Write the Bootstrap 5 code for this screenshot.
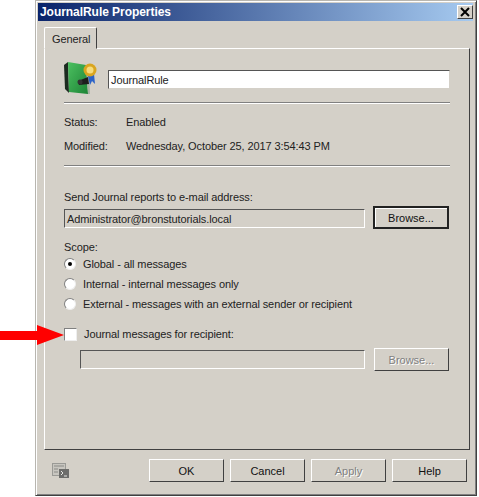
<!DOCTYPE html>
<html lang="en">
<head>
    <meta charset="UTF-8">
    <title>JournalRule Properties</title>
    <link href="https://cdn.jsdelivr.net/npm/bootstrap@5.3.3/dist/css/bootstrap.min.css" rel="stylesheet">
    <style>
        html, body { height: 497px; overflow: hidden; background: #fff; }
        body { font-family: "Liberation Sans", Arial, sans-serif; font-size: 11px; letter-spacing: -0.1px; line-height: 14px; color: #222; position: relative; }
        .dlg { margin-left: 35px; width: 442px; height: 496px; background: #d4d0c8; border: 1px solid #b8b6b0; border-right-color: #404040; border-bottom-color: #404040; box-shadow: inset 1px 1px 0 #fff, inset -1px -1px 0 #808080; padding: 2px 3px 0 2px; }
        .dlg-title { height: 18px; margin-bottom: 6px; background: linear-gradient(90deg, #0a246a, #a6caf0); color: #fff; font-weight: 700; font-size: 12px; letter-spacing: -0.05px; padding-left: 2px; }
        .dlg-close { width: 16px; height: 14px; padding: 0; background: #d4d0c8; border: 1px solid; border-color: #fff #404040 #404040 #fff; line-height: 0; }
        .dlg-body { padding-left: 6px; }
        .tab-item { width: 53px; height: 22px; padding: 4px 0 0 7px; background: #d4d0c8; border: 1px solid; border-color: #fff #404040 #d4d0c8 #fff; border-radius: 2px 2px 0 0; position: relative; margin-bottom: -1px; }
        .tab-pane-box { width: 426px; height: 402px; border: 1px solid; border-color: #fff #404040 #404040 #fff; padding: 13px 19px 0; }
        .head-row { height: 32px; margin-bottom: 8px; }
        .field { height: 19px; background: #fff; border: 1px solid; border-color: #555 #fff #fff #555; padding: 2px; }
        .field-name { width: 342px; margin-left: 9px; margin-top: 8px; border-color: #555 #d4d0c8 #d4d0c8 #555; }
        .field-off { background: #d4d0c8; }
        .rule { height: 2px; background: #808080; border-bottom: 1px solid #fff; width: 386px; }
        .rule-first { margin-bottom: 6px; }
        .rule-second { margin-top: 7px; margin-bottom: 23px; }
        .info-row { height: 24px; }
        .info-key { width: 62px; }
        .win-btn { width: 75px; height: 23px; padding: 0; background: #d4d0c8; border: 1px solid; border-color: #fff #404040 #404040 #fff; font-size: 11px; line-height: 20px; color: #111; flex: none; }
        .win-btn-def { width: 76px; margin-left: 8px; border: 2px solid #222; box-shadow: inset 1px 1px 0 #fff; }
        .win-btn:disabled { color: #808080; text-shadow: 1px 1px 0 #fff; opacity: 1; }
        .addr-row { margin-top: 2px; }
        .addr-field { width: 301px; margin-top: 3px; }
        .scope-label { margin-top: 11px; }
        .opt-row { height: 20px; gap: 7px; }
        .opt-ring { width: 12px; height: 12px; border-radius: 50%; background: #fff; border: 1px solid #808080; border-right-color: #eee; border-bottom-color: #eee; flex: none; position: relative; }
        .opt-on::after { content: ""; position: absolute; left: 3px; top: 3px; width: 4px; height: 4px; border-radius: 50%; background: #000; }
        .check-box { width: 13px; height: 13px; background: #fff; border: 1px solid #808080; border-right-color: #eee; border-bottom-color: #eee; flex: none; }
        .recip-row { margin-top: 10px; }
        .recip-inputs { margin-top: 4px; }
        .recip-field { width: 285px; margin: 2px 9px 0 16px; }
        .foot-row { width: 426px; padding: 9px 3px 0 8px; gap: 6px; }
        .foot-icon { margin-top: 4px; }
        .red-arrow { position: absolute; left: 0; top: 325px; }
    </style>
</head>
<body>
    <div class="dlg">
        <div class="dlg-title d-flex justify-content-between align-items-center">
            <span>JournalRule Properties</span>
            <button class="dlg-close" aria-label="Close">
                <svg width="10" height="10" viewBox="0 0 10 10"><path d="M1 1 L9 9 M9 1 L1 9" stroke="#000" stroke-width="2"/></svg>
            </button>
        </div>
        <div class="dlg-body">
            <div class="tab-item">General</div>
            <div class="tab-pane-box">
                <div class="d-flex head-row">
                    <svg class="flex-shrink-0" width="35" height="33" viewBox="0 0 35 33">
                        <defs>
                            <linearGradient id="coverFill" x1="0" y1="0" x2="1" y2="1">
                                <stop offset="0" stop-color="#4cc060"/>
                                <stop offset="1" stop-color="#1d8436"/>
                            </linearGradient>
                        </defs>
                        <path d="M0 3 L4 0 L5 31 L1 27 Z" fill="#1c2a20"/>
                        <path d="M4 0 L22 3 L24 32 L5 30 Z" fill="url(#coverFill)"/>
                        <path d="M22 3 L25 5 L26 32 L24 32 Z" fill="#a9b2a4"/>
                        <path d="M14 19 L24 15 L25 22 L15 23 Z" fill="#1d1d1d"/>
                        <circle cx="16" cy="20" r="2.5" fill="#333"/>
                        <path d="M24 14 L26 23 L28 19 L31 22 L30 12 Z" fill="#2a62c8"/>
                        <circle cx="26" cy="8" r="6.5" fill="#d9a520"/>
                        <circle cx="26" cy="8" r="3.5" fill="#f6dc7c"/>
                    </svg>
                    <div class="field field-name flex-shrink-0">JournalRule</div>
                </div>
                <div class="rule rule-first"></div>
                <div class="d-flex info-row align-items-center"><span class="info-key">Status:</span><span>Enabled</span></div>
                <div class="d-flex info-row align-items-center"><span class="info-key">Modified:</span><span>Wednesday, October 25, 2017 3:54:43 PM</span></div>
                <div class="rule rule-second"></div>
                <div>Send Journal reports to e-mail address:</div>
                <div class="d-flex addr-row">
                    <div class="field field-off addr-field">Administrator@bronstutorials.local</div>
                    <button class="win-btn win-btn-def">Browse...</button>
                </div>
                <div class="scope-label">Scope:</div>
                <div class="d-flex align-items-center opt-row"><span class="opt-ring opt-on"></span><span>Global - all messages</span></div>
                <div class="d-flex align-items-center opt-row"><span class="opt-ring"></span><span>Internal - internal messages only</span></div>
                <div class="d-flex align-items-center opt-row"><span class="opt-ring"></span><span>External - messages with an external sender or recipient</span></div>
                <div class="d-flex align-items-center opt-row recip-row"><span class="check-box"></span><span>Journal messages for recipient:</span></div>
                <div class="d-flex recip-inputs">
                    <div class="field field-off recip-field"></div>
                    <button class="win-btn" disabled>Browse...</button>
                </div>
            </div>
            <div class="d-flex foot-row align-items-start">
                <svg class="foot-icon me-auto" width="17" height="15" viewBox="0 0 17 15">
                    <rect x="0.5" y="0.5" width="13" height="12" fill="#c8c6c0" stroke="#9a9a96"/>
                    <path d="M2 3 H12 M2 6 H6 M2 9 H6" stroke="#8a8a86"/>
                    <rect x="7" y="6" width="10" height="9" fill="#6d6d6b"/>
                    <path d="M9 8 L11 10 L9 12 M12 13 H15" stroke="#e8e8e4" fill="none"/>
                </svg>
                <button class="win-btn">OK</button>
                <button class="win-btn">Cancel</button>
                <button class="win-btn" disabled>Apply</button>
                <button class="win-btn">Help</button>
            </div>
        </div>
    </div>
    <svg class="red-arrow" width="66" height="20" viewBox="0 0 66 20"><path d="M0 6 H37 V0 L64 10 L37 20 V15 H0 Z" fill="#f00"/></svg>
</body>
</html>
